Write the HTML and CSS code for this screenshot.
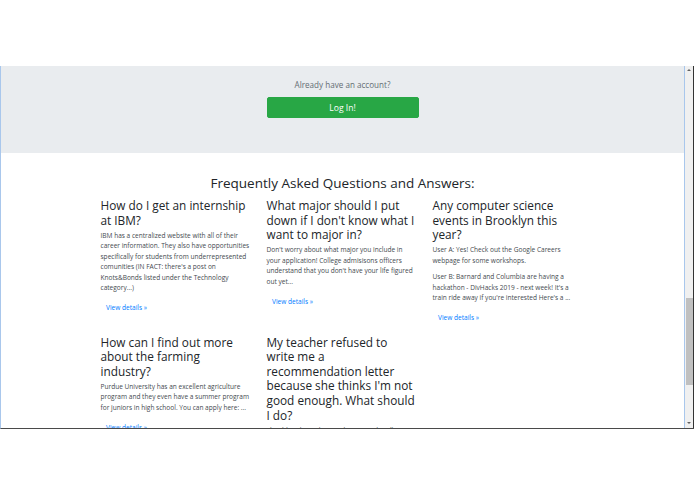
FILE: index.html
```html
<!DOCTYPE html>
<html lang="en">
<head>
<meta charset="utf-8">
<title>Knots&amp;Bonds FAQ</title>
<link rel="stylesheet" href="styles.css">
</head>
<body>
<div class="screen">
  <div class="page">
    <section class="jumbotron">
      <div class="login">
        <p class="login-text">Already have an account?</p>
        <a class="btn-login" href="#">Log In!</a>
      </div>
    </section>
    <main class="faq">
      <h2 class="faq-title">Frequently Asked Questions and Answers:</h2>
      <div class="faq-grid">
        <div class="faq-item">
          <h3>How do I get an internship at IBM?</h3>
          <p>IBM has a centralized website with all of their career information. They also have opportunities specifically for students from underrepresented comunities (IN FACT: there's a post on Knots&amp;Bonds listed under the Technology category...)</p>
          <a class="details" href="#">View details &raquo;</a>
        </div>
        <div class="faq-item">
          <h3>What major should I put down if I don't know what I want to major in?</h3>
          <p>Don't worry about what major you include in your application! College admisisons officers understand that you don't have your life figured out yet...</p>
          <a class="details" href="#">View details &raquo;</a>
        </div>
        <div class="faq-item">
          <h3>Any computer science events in Brooklyn this year?</h3>
          <p>User A: Yes! Check out the Google Careers webpage for some workshops.</p>
          <p>User B: Barnard and Columbia are having a hackathon - DivHacks 2019 - next week! It's a train ride away if you're interested Here's a ...</p>
          <a class="details" href="#">View details &raquo;</a>
        </div>
        <div class="faq-item">
          <h3>How can I find out more about the farming industry?</h3>
          <p>Purdue University has an excellent agriculture program and they even have a summer program for juniors in high school. You can apply here: ...</p>
          <a class="details" href="#">View details &raquo;</a>
        </div>
        <div class="faq-item">
          <h3>My teacher refused to write me a recommendation letter because she thinks I'm not good enough. What should I do?</h3>
          <p>Should I ask another teacher instead? Talk to your counselor about your options...</p>
          <a class="details" href="#">View details &raquo;</a>
        </div>
      </div>
    </main>
  </div>
  <div class="scrollbar">
    <span class="arrow arrow-up"></span>
    <span class="thumb"></span>
    <span class="arrow arrow-down"></span>
  </div>
</div>
</body>
</html>
```

FILE: styles.css
```css
* {
  box-sizing: border-box;
}

html, body {
  margin: 0;
  padding: 0;
  background: #ffffff;
}

body {
  width: 695px;
  height: 494px;
  overflow: hidden;
  font-family: "Open Sans", "Noto Sans", "Liberation Sans", sans-serif;
  color: #212529;
}

.screen {
  margin-top: 66px;
  width: 694px;
  height: 363px;
  display: flex;
  border-left: 1px solid #a9c7ec;
  border-bottom: 1px solid #4a4a4a;
}

.page {
  flex: 1;
  overflow: hidden;
  background: #ffffff;
}

/* Jumbotron */
.jumbotron {
  background: #e9ecef;
  height: 87px;
  padding-top: 13px;
}

.login {
  display: flex;
  flex-direction: column;
  align-items: center;
}

.login-text {
  margin: 0;
  font-size: 8.1px;
  line-height: 12px;
  color: #646c73;
}

.btn-login {
  margin-top: 6px;
  width: 152px;
  height: 21px;
  display: flex;
  align-items: center;
  justify-content: center;
  background: #28a745;
  border: 1px solid #28a745;
  border-radius: 2px;
  color: #ffffff;
  font-size: 8.6px;
  text-decoration: none;
}

/* FAQ */
.faq {
  width: 498px;
  margin: 0 auto;
}

.faq-title {
  margin: 22px 0 6px;
  text-align: center;
  font-size: 13.5px;
  line-height: 17px;
  font-weight: 500;
  color: #212529;
}

.faq-grid {
  display: grid;
  grid-template-columns: repeat(3, 1fr);
  row-gap: 6.7px;
}

.faq-item {
  padding: 0 9px 0 7px;
}

.faq-item h3 {
  margin: 0 0 3.5px;
  font-size: 11.8px;
  line-height: 14.6px;
  font-weight: 500;
  color: #212529;
}

.faq-item p {
  margin: 0 0 5.8px;
  font-size: 6.56px;
  line-height: 10.5px;
  color: #454a4f;
}

.details {
  display: block;
  width: fit-content;
  padding: 4px 5.5px;
  font-size: 6.56px;
  line-height: 10.5px;
  color: #007bff;
  text-decoration: none;
}

/* Scrollbar */
.scrollbar {
  width: 10px;
  display: flex;
  flex-direction: column;
  align-items: center;
  background: #f0f0f0;
  border-left: 1px solid #a9c7ec;
  border-right: 1px solid #333333;
}

.arrow {
  width: 0;
  height: 0;
  border-left: 2px solid transparent;
  border-right: 2px solid transparent;
}

.arrow-up {
  margin-top: 3px;
  border-bottom: 2px solid #606060;
}

.thumb {
  margin-top: 227px;
  width: 7px;
  height: 87px;
  background: #c0c0c0;
}

.arrow-down {
  margin-top: auto;
  margin-bottom: 4px;
  border-top: 2px solid #606060;
}
```
